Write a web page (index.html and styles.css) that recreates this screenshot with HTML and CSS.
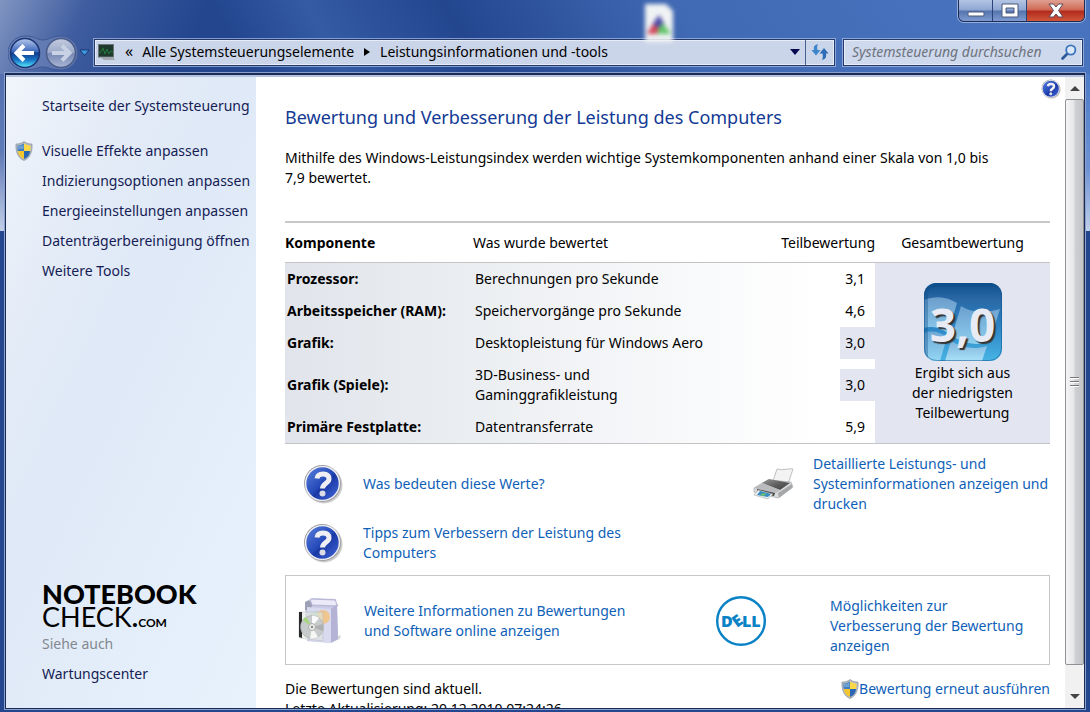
FILE: index.html
```html
<!DOCTYPE html>
<html lang="de">
<head>
    <meta charset="UTF-8">
    <meta name="viewport" content="width=device-width, initial-scale=1.0">
    <title>Leistungsinformationen und -tools</title>
    <link rel="stylesheet" href="styles.css">
</head>
<body>
    <!-- Symbole, die mehrfach vorkommen -->
    <svg class="defs" width="0" height="0" aria-hidden="true">
        <defs>
            <linearGradient id="helpBlue" x1="0" y1="0" x2="1" y2="1">
                <stop offset="0" stop-color="#5a80dc"/>
                <stop offset="0.5" stop-color="#2448b8"/>
                <stop offset="0.55" stop-color="#1a38a4"/>
                <stop offset="1" stop-color="#4468dc"/>
            </linearGradient>
            <linearGradient id="ring" x1="0" y1="0" x2="1" y2="1">
                <stop offset="0" stop-color="#77777c"/>
                <stop offset="0.5" stop-color="#c4c4c8"/>
                <stop offset="1" stop-color="#77777c"/>
            </linearGradient>
        </defs>
        <symbol id="help" viewBox="0 0 40 40">
            <circle cx="21" cy="21" r="18.5" fill="#000" opacity="0.2"/>
            <circle cx="19.5" cy="19.5" r="18.5" fill="url(#ring)"/>
            <circle cx="19.5" cy="19.5" r="17.6" fill="#f1f1f5"/>
            <circle cx="19.5" cy="19.5" r="16.2" fill="url(#helpBlue)"/>
            <path d="M14 14.5C14.500 11 16.500 10 20 10C24 10 26 12 26 15C26 19.500 19.500 19 19.500 24.500" fill="none" stroke="#eeeef4" stroke-width="5"/>
            <circle cx="19.500" cy="29.500" r="3" fill="#dcdce6"/>
        </symbol>
        <symbol id="shield" viewBox="0 0 18 20">
            <path d="M9 0.500C11.500 2.500 14 3 17 3C17.500 11 15 17 9 19.500C3 17 0.500 11 1 3C4 3 6.500 2.500 9 0.500Z" fill="#b4bac2" stroke="#8d949c" stroke-width="0.700"/>
            <path d="M9 2.500V10H2.800C2.400 8 2.400 6 2.600 4.600C5 4.500 7 3.800 9 2.500Z" fill="#3f7fc2"/>
            <path d="M9 2.500V10H15.200C15.600 8 15.600 6 15.400 4.600C13 4.500 11 3.800 9 2.500Z" fill="#fbd848"/>
            <path d="M9 10H2.800C3.300 14 5.300 16.500 9 18Z" fill="#f3c52f"/>
            <path d="M9 10H15.200C14.700 14 12.700 16.500 9 18Z" fill="#2a66b4"/>
            <path d="M3 5C5.500 5 7 4.500 8.500 3.500V8H3Z" fill="#fff" opacity="0.25"/>
        </symbol>
    </svg>

    <div class="window">
        <div class="titlebar">
            <svg class="desktop-icon" width="34" height="42" viewBox="0 0 34 42" aria-hidden="true">
                <path d="M3 4H24L31 11V42H3Z" fill="#f0f2f4"/>
                <path d="M17 15L23 25L17 28L10 25Z" fill="#4a48a8"/>
                <path d="M11 24L17 28L15 34L5 34Z" fill="#d2455a"/>
                <path d="M21 23L29 34L15 34L17 27Z" fill="#62c46a"/>
            </svg>
            <div class="window-buttons">
                <button class="win-btn" type="button" aria-label="Minimieren">
                    <svg width="18" height="16" viewBox="0 0 18 16"><rect x="1" y="9" width="16" height="4" rx="1" fill="#fff" stroke="#4b587b"/></svg>
                </button>
                <button class="win-btn" type="button" aria-label="Maximieren">
                    <svg width="18" height="16" viewBox="0 0 18 16"><path d="M1 1H17V14H1ZM5 5V10H13V5Z" fill="#fff" fill-rule="evenodd" stroke="#4b587b"/></svg>
                </button>
                <button class="win-btn win-close" type="button" aria-label="Schließen">
                    <svg width="18" height="16" viewBox="0 0 18 16"><path d="M2 1H6.500L9 4L11.500 1H16L11.500 7.500L16 14H11.500L9 11L6.500 14H2L6.500 7.500Z" fill="#fff" stroke="#5b4a58"/></svg>
                </button>
            </div>
        </div>

        <nav class="navbar">
            <svg class="nav-arrows" width="82" height="36" viewBox="0 0 82 36" role="img" aria-label="Zurück und Vorwärts">
                <defs>
                    <linearGradient id="backFill" x1="0" y1="0" x2="0" y2="1">
                        <stop offset="0" stop-color="#b8c9ec"/>
                        <stop offset="0.45" stop-color="#3c68bc"/>
                        <stop offset="0.5" stop-color="#113a8c"/>
                        <stop offset="0.75" stop-color="#187ac8"/>
                        <stop offset="1" stop-color="#5ff0ff"/>
                    </linearGradient>
                    <linearGradient id="fwdFill" x1="0" y1="0" x2="0" y2="1">
                        <stop offset="0" stop-color="#c3cbdf"/>
                        <stop offset="0.48" stop-color="#9dabca"/>
                        <stop offset="0.52" stop-color="#7688b4"/>
                        <stop offset="1" stop-color="#a9b6d4"/>
                    </linearGradient>
                </defs>
                <path d="M17 1C27 1 29 5 35 5C41 5 43 1 53 1A17 17 0 0 1 53 35C43 35 41 32 35 32C29 32 27 35 17 35A17 17 0 0 1 17 1Z" fill="#6f86bb" fill-opacity="0.6" stroke="#3d5896"/>
                <circle cx="17" cy="18" r="14.500" fill="url(#backFill)" stroke="#1b3474" stroke-width="1.500"/>
                <circle cx="53" cy="18" r="14.500" fill="url(#fwdFill)" stroke="#4a5c88" stroke-width="1.500"/>
                <path d="M16 10.500L8.500 18L16 25.500M9 18H26" fill="none" stroke="#fff" stroke-width="4"/>
                <path d="M54 10.500L61.500 18L54 25.500M61 18H44" fill="none" stroke="#c9d1e4" stroke-width="4"/>
                <path d="M72 15H81L77 20H76Z" fill="#3f9be0" stroke="#142c66" stroke-width="0.800"/>
            </svg>
            <div class="address">
                <svg class="address-icon" width="18" height="16" viewBox="0 0 18 16" aria-hidden="true">
                    <path d="M3 14H16L17 16H6Z" fill="#a4a9ae"/>
                    <rect x="0.500" y="0.500" width="15" height="12.500" fill="#1d3a2c" stroke="#6e7478"/>
                    <path d="M1 9L3 8L5 4L7 10L9 5L11 10L13 7L15 8" fill="none" stroke="#24783a"/>
                </svg>
                <span class="crumb-more">«</span>
                <a class="crumb" href="#">Alle Systemsteuerungselemente</a>
                <svg class="crumb-arrow" width="6" height="8" viewBox="0 0 6 8" aria-hidden="true"><path d="M0 0L6 4L0 8Z" fill="#000"/></svg>
                <a class="crumb" href="#">Leistungsinformationen und -tools</a>
                <button class="address-drop" type="button" aria-label="Verlauf">
                    <svg width="10" height="6" viewBox="0 0 10 6"><path d="M0 0H10L5 6Z" fill="#06084f"/></svg>
                </button>
                <button class="refresh" type="button" aria-label="Aktualisieren">
                    <svg width="18" height="16" viewBox="0 0 18 16">
                        <path d="M7 0C3 1 2.500 3 3 6H0.500L5 11.500L9.500 6H6.500C6 4 6 2 7 0Z" fill="#3d86cc"/>
                        <path d="M11 16C15 15 15.500 13 15 9.500H17.500L13 4L8.500 9.500H11.500C12 12 12 14 11 16Z" fill="#2d6db8"/>
                    </svg>
                </button>
            </div>
            <label class="search">
                <input type="search" placeholder="Systemsteuerung durchsuchen" aria-label="Systemsteuerung durchsuchen">
                <svg width="16" height="16" viewBox="0 0 16 16" aria-hidden="true">
                    <path d="M1.500 14.500L6.500 9.500" stroke="#2b5899" stroke-width="2.600" stroke-linecap="round"/>
                    <circle cx="9.800" cy="6" r="4.600" fill="#dbe7f6" stroke="#3a74bd" stroke-width="1.800"/>
                </svg>
            </label>
        </nav>

        <div class="client">
            <aside class="sidebar">
                <a class="side-link side-home" href="#">Startseite der Systemsteuerung</a>
                <a class="side-link side-shield" href="#"><svg width="18" height="20"><use href="#shield"/></svg>Visuelle Effekte anpassen</a>
                <a class="side-link" href="#">Indizierungsoptionen anpassen</a>
                <a class="side-link" href="#">Energieeinstellungen anpassen</a>
                <a class="side-link" href="#">Datenträgerbereinigung öffnen</a>
                <a class="side-link" href="#">Weitere Tools</a>
                <div class="side-bottom">
                    <div class="logo">
                        <div class="logo-top">NOTEBOOK</div>
                        <div class="logo-sub">CHECK<span class="logo-dot">.</span><span class="logo-com">COM</span></div>
                    </div>
                    <div class="see-also">Siehe auch</div>
                    <a class="side-link" href="#">Wartungscenter</a>
                </div>
            </aside>

            <main class="content">
                <h1>Bewertung und Verbesserung der Leistung des Computers</h1>
                <p class="intro">Mithilfe des Windows-Leistungsindex werden wichtige Systemkomponenten anhand einer Skala von 1,0 bis 7,9 bewertet.</p>

                <table class="scores">
                    <thead>
                        <tr>
                            <th class="col-name">Komponente</th>
                            <th class="col-what">Was wurde bewertet</th>
                            <th class="col-sub" colspan="2">Teilbewertung</th>
                            <th class="col-total">Gesamtbewertung</th>
                        </tr>
                    </thead>
                    <tbody>
                        <tr>
                            <td class="name">Prozessor:</td>
                            <td>Berechnungen pro Sekunde</td>
                            <td class="gap"></td>
                            <td class="score">3,1</td>
                            <td class="total" rowspan="5">
                                <div class="badge">
                                    <svg width="78" height="78" viewBox="0 0 78 78" aria-hidden="true">
                                        <defs>
                                            <linearGradient id="tile" x1="0" y1="0" x2="0" y2="1">
                                                <stop offset="0" stop-color="#0d4f8c"/>
                                                <stop offset="0.2" stop-color="#2a68a5"/>
                                                <stop offset="0.55" stop-color="#2c83c4"/>
                                                <stop offset="1" stop-color="#48b4e4"/>
                                            </linearGradient>
                                            <linearGradient id="flag" x1="0" y1="0" x2="0" y2="1">
                                                <stop offset="0" stop-color="#88b4dc"/>
                                                <stop offset="1" stop-color="#b4e6fa"/>
                                            </linearGradient>
                                            <clipPath id="tileClip"><rect width="78" height="78" rx="12"/></clipPath>
                                        </defs>
                                        <g clip-path="url(#tileClip)">
                                            <rect width="78" height="78" fill="url(#tile)"/>
                                            <path d="M0 17C12 12 24 14 33 20L24 50C15 44 7 43 0 45Z" fill="url(#flag)" opacity="0.7"/>
                                            <path d="M37 23C48 30 60 31 76 26L66 58C52 64 40 60 28 53Z" fill="url(#flag)" opacity="0.7"/>
                                            <path d="M0 50C8 47 16 49 23 54L16 78H0Z" fill="url(#flag)" opacity="0.7"/>
                                            <path d="M27 58C38 65 50 67 63 63L58 78H21Z" fill="url(#flag)" opacity="0.9"/>
                                            <path d="M0 0H78V4H12Q4 4 4 14V78H0Z" fill="#0b4a85" opacity="0.35"/>
                                        </g>
                                        <rect x="0.500" y="0.500" width="77" height="77" rx="12" fill="none" stroke="#0b4f8c" opacity="0.5"/>
                                    </svg>
                                    <span class="badge-value">3,0</span>
                                </div>
                                <div class="total-text">Ergibt sich aus<br>der niedrigsten<br>Teilbewertung</div>
                            </td>
                        </tr>
                        <tr>
                            <td class="name">Arbeitsspeicher (RAM):</td>
                            <td>Speichervorgänge pro Sekunde</td>
                            <td class="gap"></td>
                            <td class="score">4,6</td>
                        </tr>
                        <tr>
                            <td class="name">Grafik:</td>
                            <td>Desktopleistung für Windows Aero</td>
                            <td class="gap"></td>
                            <td class="score"><span class="lowest">3,0</span></td>
                        </tr>
                        <tr>
                            <td class="name">Grafik (Spiele):</td>
                            <td>3D-Business- und<br>Gaminggrafikleistung</td>
                            <td class="gap"></td>
                            <td class="score"><span class="lowest">3,0</span></td>
                        </tr>
                        <tr>
                            <td class="name">Primäre Festplatte:</td>
                            <td>Datentransferrate</td>
                            <td class="gap"></td>
                            <td class="score">5,9</td>
                        </tr>
                    </tbody>
                </table>

                <div class="help-links">
                    <div class="help-left">
                        <a class="task" href="#"><svg width="40" height="40"><use href="#help"/></svg><span>Was bedeuten diese Werte?</span></a>
                        <a class="task" href="#"><svg width="40" height="40"><use href="#help"/></svg><span>Tipps zum Verbessern der Leistung des Computers</span></a>
                    </div>
                    <a class="task task-print" href="#">
                        <svg width="42" height="34" viewBox="0 0 42 34" aria-hidden="true">
                            <defs>
                                <linearGradient id="lid" x1="0" y1="0" x2="1" y2="1">
                                    <stop offset="0" stop-color="#9a9a9a"/>
                                    <stop offset="0.5" stop-color="#606060"/>
                                    <stop offset="1" stop-color="#3e3e3e"/>
                                </linearGradient>
                            </defs>
                            <path d="M24 2C30 4 34 1 40 2L35 17L20 14Z" fill="#f3f3f4" stroke="#c0c0c0"/>
                            <path d="M1 21L15 13L38 15L40 20L25 31L1 25Z" fill="#d8dadc" stroke="#a9abad" stroke-width="0.700"/>
                            <path d="M9 16L16 12L37 16L27 23Z" fill="url(#lid)"/>
                            <path d="M1 21L9 16L27 23L23 26Z" fill="#b9bbbd"/>
                            <path d="M25 26L39 17V21L26 31Z" fill="#a5a7a9"/>
                            <path d="M4 22L22 26L21 29L4 25Z" fill="#444"/>
                            <path d="M5 23L20 27L15 32L1 28Z" fill="#eee" stroke="#999" stroke-width="0.500"/>
                            <path d="M7 24L18 27L15 30L4 28Z" fill="#348bc6"/>
                            <path d="M10 26L14 27L10 29L7 28Z" fill="#6cc06d"/>
                        </svg>
                        <span>Detaillierte Leistungs- und Systeminformationen anzeigen und drucken</span>
                    </a>
                </div>

                <div class="online-box">
                    <a class="task task-online" href="#">
                        <svg width="44" height="48" viewBox="0 0 44 48" aria-hidden="true">
                            <path d="M36 40L43 38L42 42L32 46Z" fill="#000" opacity="0.15"/>
                            <path d="M7 7L12 3L14 1L38 2L39 9L40 42L32 46L9 44Z" fill="#c9cae4"/>
                            <path d="M12 2L37 3L40 9L14 8Z" fill="#eceaf8" stroke="#a5a4c6" stroke-width="0.700"/>
                            <path d="M7 5L11 3L14 8L13 14L7 13Z" fill="#9da0b6"/>
                            <path d="M9 10L33 12V46L9 43Z" fill="#d9d9f0"/>
                            <path d="M33 12L39 7L40 42L33 46Z" fill="#b4b3d6"/>
                            <circle cx="25" cy="20" r="7" fill="#f0c690"/>
                            <path d="M12 16L20 14L22 24H12Z" fill="#abd2b2" opacity="0.6"/>
                            <path d="M1 15H25V44L1 41Z" fill="#dfe6df" opacity="0.6" stroke="#b0b5b2" stroke-width="0.700"/>
                            <path d="M1 15H4V41L1 40Z" fill="#292929"/>
                            <circle cx="14" cy="30" r="11.500" fill="#c8cbcc" stroke="#a2a5a6" stroke-width="0.500"/>
                            <path d="M14 30L5 23A11.500 11.500 0 0 1 8 20Z" fill="#9ada63" opacity="0.8"/>
                            <path d="M14 30L14 18.500A11.500 11.500 0 0 1 21 21Z" fill="#fafafa"/>
                            <path d="M14 30L12 41.500A11.500 11.500 0 0 0 20 40Z" fill="#f6f6f6"/>
                            <path d="M14 30L25 27A11.500 11.500 0 0 1 25 34Z" fill="#aeb0b2"/>
                            <circle cx="14" cy="30" r="3.500" fill="#eef0ee" stroke="#aaa"/>
                            <circle cx="14" cy="30" r="1.300" fill="#8b8d8b"/>
                        </svg>
                        <span>Weitere Informationen zu Bewertungen und Software online anzeigen</span>
                    </a>
                    <a class="task task-dell" href="#">
                        <svg width="50" height="50" viewBox="0 0 50 50" role="img" aria-label="Dell">
                            <circle cx="25" cy="25" r="23.800" fill="#fff" stroke="#0a82c6" stroke-width="2.400"/>
                            <text class="dell-text" x="5" y="31">D</text>
                            <text class="dell-text" transform="translate(21 32) rotate(-36)">E</text>
                            <text class="dell-text" x="26" y="31">LL</text>
                        </svg>
                        <span>Möglichkeiten zur Verbesserung der Bewertung anzeigen</span>
                    </a>
                </div>

                <div class="status">
                    <div>Die Bewertungen sind aktuell.<br>Letzte Aktualisierung: 20.12.2010 07:24:26</div>
                    <a class="rerun" href="#"><svg width="18" height="20"><use href="#shield"/></svg>Bewertung erneut ausführen</a>
                </div>
            </main>

            <button class="help-btn" type="button" aria-label="Hilfe"><svg width="20" height="20"><use href="#help"/></svg></button>

            <div class="scrollbar">
                <button class="scroll-btn" type="button" aria-label="Nach oben"><svg width="10" height="5" viewBox="0 0 10 5"><path d="M5 0L10 5H0Z" fill="#444"/></svg></button>
                <div class="scroll-thumb"><span class="grip"></span></div>
                <button class="scroll-btn scroll-down" type="button" aria-label="Nach unten"><svg width="10" height="5" viewBox="0 0 10 5"><path d="M0 0H10L5 5Z" fill="#444"/></svg></button>
            </div>
        </div>
    </div>
</body>
</html>
```
FILE: styles.css
```css
* {
    margin: 0;
    padding: 0;
    box-sizing: border-box;
}

body {
    height: 100vh;
    overflow: hidden;
    font-family: "Noto Sans", "Open Sans", sans-serif;
    font-size: 14px;
    line-height: 20px;
    color: #000;
}

a {
    color: #0f5fb8;
    text-decoration: none;
}

button {
    border: none;
    background: none;
    display: flex;
    align-items: center;
    justify-content: center;
}

svg {
    flex-shrink: 0;
}

.defs {
    position: absolute;
}

/* Fensterrahmen */
.window {
    display: flex;
    flex-direction: column;
    height: 100vh;
    padding: 0 5px 3px;
    background:
        linear-gradient(115deg, rgba(160, 175, 210, 0.75) 0, rgba(90, 115, 175, 0.5) 80px, rgba(40, 75, 150, 0) 190px) 0 0 / 100% 74px no-repeat,
        linear-gradient(60deg, rgba(85, 130, 205, 0) 220px, rgba(85, 130, 205, 0.35) 300px, rgba(85, 130, 205, 0) 420px, rgba(85, 130, 205, 0.6) 620px, rgba(85, 130, 205, 0.75) 900px) 0 0 / 100% 74px no-repeat,
        linear-gradient(#5570b0, #5f7ab8 50%, #c3cfe8) 0 74px / 5px 157px no-repeat,
        linear-gradient(#4e7cc8, #6e93d4 60%, #c0d0ea) 100% 74px / 5px 157px no-repeat,
        #23468f;
}

.titlebar {
    display: flex;
    justify-content: flex-end;
    height: 38px;
    position: relative;
}

.desktop-icon {
    position: absolute;
    left: 59%;
    top: 0;
    filter: blur(2px);
}

.window-buttons {
    display: flex;
    height: 22px;
    border: 1px solid #1d2c54;
    border-top: none;
    border-radius: 0 0 6px 6px;
    overflow: hidden;
    box-shadow: 0 0 0 1px rgba(200, 215, 245, 0.6);
}

.win-btn {
    width: 34px;
    border-right: 1px solid #2c4377;
    background: linear-gradient(#b4c5e4, #8da6d2 48%, #5574ae 52%, #7d9bd0);
}

.win-close {
    width: 57px;
    border-right: none;
    background: linear-gradient(#dfa092, #cf6753 48%, #b12a1c 52%, #d15639);
}

/* Navigationsleiste */
.navbar {
    display: flex;
    align-items: center;
    height: 35px;
    padding: 0 2px 0 3px;
}

.nav-arrows {
    margin-bottom: 5px;
}

.address,
.search {
    display: flex;
    align-items: center;
    height: 27px;
    margin-bottom: 7px;
    border: 1px solid #26396b;
    background: #cbd5e9;
    box-shadow: inset 0 0 0 1px #e6ecf8, 0 0 0 1px rgba(170, 190, 230, 0.7);
}

.address {
    flex: 1;
    margin-left: 4px;
    padding-left: 3px;
}

.crumb-more {
    margin: 0 9px 3px;
    font-size: 16px;
}

.crumb {
    color: #000;
    white-space: nowrap;
}

.crumb-arrow {
    margin: 0 10px;
}

.address-drop {
    width: 20px;
    height: 25px;
    margin-left: auto;
}

.refresh {
    width: 29px;
    height: 25px;
    border-left: 1px solid #4b5f90;
}

.search {
    width: 240px;
    margin-left: 8px;
    padding: 0 5px 0 8px;
    background: #ced9ed;
}

.search input {
    flex: 1;
    min-width: 0;
    border: none;
    outline: none;
    background: none;
    font: inherit;
    font-style: italic;
}

.search input::placeholder {
    color: #6f737c;
    opacity: 1;
}

/* Inhalt */
.client {
    display: flex;
    flex: 1;
    min-height: 0;
    position: relative;
    overflow: hidden;
    padding-top: 2px;
    border: 1px solid #1a2b55;
    border-top-width: 2px;
    background: #fff;
    box-shadow: 0 0 0 1px #8ba2cf, inset 0 2px 0 #b4c2de;
}

.sidebar {
    display: flex;
    flex-direction: column;
    width: 250px;
    flex-shrink: 0;
    padding: 15px 0 24px 36px;
    background: linear-gradient(115deg, #f0f5fb 0, #e3ebf7 25%, #dfe9f7 45%, #e4eefa 70%, #e8f2fd 100%);
}

.side-link {
    margin-top: 10px;
    color: #151c55;
    white-space: nowrap;
}

.side-home {
    margin: 4px 0 15px;
}

.side-shield {
    display: flex;
    gap: 9px;
    margin-left: -27px;
}

.side-bottom {
    display: flex;
    flex-direction: column;
    margin-top: auto;
}

.logo {
    font-family: Lato, sans-serif;
    line-height: 23px;
    color: #000;
}

.logo-top {
    font-size: 27px;
    font-weight: 900;
}

.logo-sub {
    font-size: 27px;
}

.logo-dot,
.logo-com {
    font-weight: bold;
}

.logo-com {
    font-size: 12px;
}

.see-also {
    color: #84888e;
}

.content {
    flex: 1;
    min-width: 0;
    padding: 28px 15px 0 29px;
}

h1 {
    font-size: 18px;
    font-weight: normal;
    line-height: 24px;
    color: #123a94;
}

.intro {
    margin-top: 19px;
    margin-bottom: 33px;
    padding-right: 40px;
}

.scores {
    width: 100%;
    border-collapse: collapse;
    border-top: 2px solid #c8c8c8;
    border-bottom: 1px solid #c4c4c4;
}

.scores th {
    height: 40px;
    padding-top: 1px;
    font-weight: normal;
    text-align: left;
    border-bottom: 1px solid #c4c4c4;
    white-space: nowrap;
}

.scores th.col-name {
    width: 188px;
    font-weight: bold;
}

.scores th.col-sub {
    text-align: right;
}

.scores th.col-total {
    width: 175px;
    text-align: center;
}

.scores tbody {
    background: linear-gradient(90deg, #e1e5eb 0, #e9ecf0 20%, #f7f8fa 50%, #fff 70%);
}

.scores td {
    padding: 6px 2px;
}

.scores .name {
    font-weight: bold;
    white-space: nowrap;
}

.scores td.score {
    width: 35px;
    padding: 0 10px 0 0;
    text-align: right;
    background: #fff;
}

.lowest {
    display: block;
    margin-right: -10px;
    padding: 6px 10px 6px 0;
    background: #e3e6f1;
}

.scores td.total {
    padding: 0;
    text-align: center;
    background: #e3e6f1;
}

.badge {
    display: grid;
    place-items: center;
    margin-bottom: 2px;
}

.badge svg,
.badge-value {
    grid-area: 1 / 1;
}

.badge-value {
    padding-top: 4px;
    font-size: 46px;
    line-height: 60px;
    font-weight: bold;
    color: #e8ebf4;
    text-shadow: 2px 2px 1px #333;
}

/* Aufgaben */
.task {
    display: flex;
    align-items: center;
}

.help-links {
    display: flex;
    padding-top: 10px;
    min-height: 131px;
}

.help-left {
    display: flex;
    flex-direction: column;
    gap: 19px;
    width: 450px;
    padding: 10px 90px 0 18px;
}

.help-left .task {
    gap: 20px;
}

.task-print {
    flex: 1;
    align-self: flex-start;
    gap: 18px;
    padding-left: 18px;
}

.online-box {
    display: flex;
    height: 90px;
    border: 1px solid #c8c8c8;
}

.task-online {
    width: 430px;
    padding: 2px 80px 0 12px;
    gap: 22px;
}

.task-dell {
    flex: 1;
    gap: 64px;
    padding: 12px 20px 0 0;
}

.task-dell svg {
    margin-bottom: 10px;
}

.dell-text {
    font-family: "Open Sans", sans-serif;
    font-size: 16px;
    font-weight: 800;
    fill: #0a82c6;
}

.status {
    display: flex;
    justify-content: space-between;
    align-items: flex-start;
    padding-top: 14px;
    white-space: nowrap;
}

.rerun {
    display: flex;
}

.help-btn {
    position: absolute;
    top: 4px;
    right: 23px;
}

/* Bildlaufleiste */
.scrollbar {
    display: flex;
    flex-direction: column;
    width: 19px;
    flex-shrink: 0;
    background: #f1f1f2;
}

.scroll-btn {
    height: 22px;
}

.scroll-thumb {
    flex: 1;
    display: flex;
    align-items: center;
    justify-content: center;
    border: 1px solid #8f9196;
    border-radius: 2px;
    background: linear-gradient(90deg, #f5f5f5, #e6e6e8 45%, #cfd0d3 55%, #c3c4c8);
}

.scroll-down {
    height: 43px;
    padding-top: 20px;
}

.grip {
    width: 9px;
    height: 11px;
    background: repeating-linear-gradient(#777 0, #777 1px, #fff 1px, #fff 2px, transparent 2px, transparent 4px);
}
```
